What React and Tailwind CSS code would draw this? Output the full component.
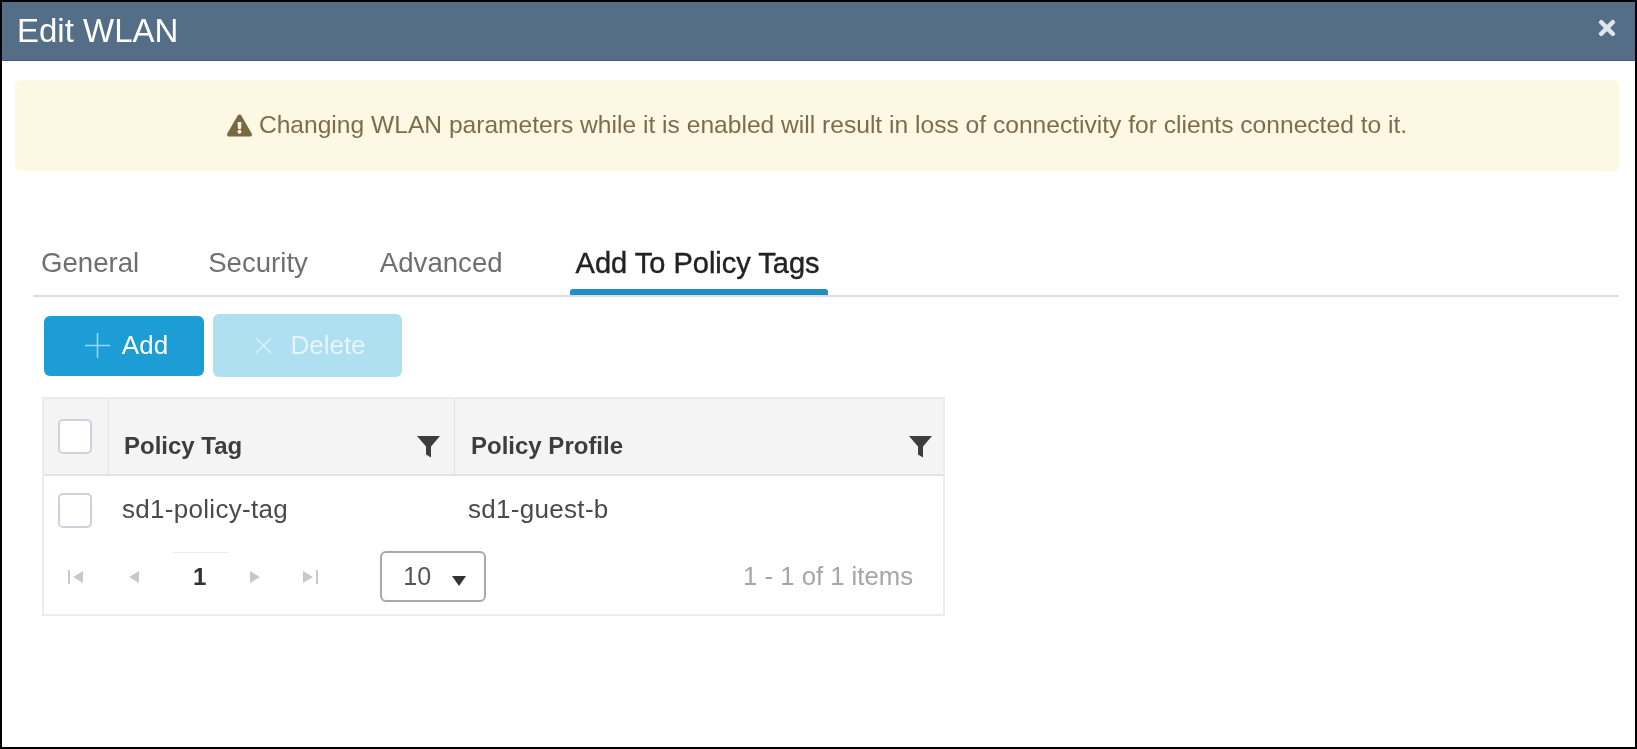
import React from "react";
import { FaTimes, FaExclamationTriangle } from "react-icons/fa";

const Filter = ({ className }) => (
  <svg viewBox="0 0 23 23" className={className} fill="#3d3d3d">
    <path d="M0 1h23L14 11.5V22.500l-5-3V11.500z" />
  </svg>
);

const Pg = ({ dir, bar, className }) => (
  <svg viewBox="0 0 16 14" className={className} fill="#c9c9c9">
    {dir === "l" ? (
      <>
        {bar && <rect x="0" y="0" width="2" height="14" />}
        <path d="M15 1v12L5 7z" />
      </>
    ) : (
      <>
        {bar && <rect x="14" y="0" width="2" height="14" />}
        <path d="M1 1v12l10-6z" />
      </>
    )}
  </svg>
);

const Check = ({ className = "" }) => (
  <div className={`h-[35px] w-[34px] rounded-[5px] border-2 border-[#ccd3dc] bg-white ${className}`} />
);

export default function App() {
  return (
    <div
      className="flex h-[749px] w-[1637px] flex-col overflow-hidden border-2 border-black bg-white blur-[0.6px]"
      style={{ fontFamily: '"Liberation Sans", Arial, sans-serif' }}
    >
      <header className="flex h-[59px] shrink-0 items-center justify-between border-b border-[#46596b] bg-[#536e86] pl-[15px] pr-[16px] text-white">
        <h1 className="mb-[2px] text-[33px] leading-none">Edit WLAN</h1>
        <FaTimes className="mb-[6px] text-[24px] text-[#dfe5ea]" />
      </header>

      <div className="ml-[13px] mr-[16px] mt-[19px] flex h-[91px] shrink-0 items-center justify-center rounded-[5px] bg-[#fcf8e4] text-[24.6px] text-[#7d6d4b]">
        <FaExclamationTriangle className="mr-[7px] text-[25px] text-[#7a6743]" />
        <span>Changing WLAN parameters while it is enabled will result in loss of connectivity for clients connected to it.</span>
      </div>

      <nav className="ml-[31px] mr-[16px] mt-[67px] flex h-[59px] shrink-0 items-start border-b-2 border-[#d9dde2] pl-[8px] pt-[3px] text-[27.6px] leading-[44px] text-[#6f6f6f]">
        <span className="mr-[69px]">General</span>
        <span className="mr-[72px]">Security</span>
        <span className="mr-[73px]">Advanced</span>
        <span className="relative text-[29px] text-[#222222] [-webkit-text-stroke:0.4px_#222222]">
          Add To Policy Tags
          <span className="absolute -left-[6px] -right-[8px] top-[48px] h-[6px] rounded-t-[3px] bg-[#1f8fc4]" />
        </span>
      </nav>

      <div className="ml-[42px] mt-[17px] flex items-center gap-[9px] text-[26px] text-white">
        <button className="flex h-[60px] w-[160px] items-center justify-center gap-[12px] rounded-[6px] bg-[#1c9dd6] pl-[5px]">
          <svg viewBox="0 0 24 24" className="h-[25px] w-[25px]" stroke="#9fd6ee" strokeWidth="1.500" fill="none">
            <path d="M12 0v24M0 12h24" />
          </svg>
          <span>Add</span>
        </button>
        <button className="flex h-[63px] w-[189px] items-center justify-center gap-[18px] rounded-[6px] bg-[#aee0f1] pl-[6px] text-[#e6f5fb]">
          <svg viewBox="0 0 18 18" className="h-[17px] w-[17px]" stroke="#dcf1f9" strokeWidth="1.500" fill="none">
            <path d="M1 1l16 16M17 1L1 17" />
          </svg>
          <span>Delete</span>
        </button>
      </div>

      <div className="ml-[40px] mt-[20px] w-[903px] border-2 border-[#ececec] text-[24px]">
        <div className="flex h-[77px] border-b-2 border-[#e3e3e3] bg-[#f4f4f4] font-bold text-[#3d3d3d]">
          <div className="w-[65px] border-r border-[#e3e3e3] pl-[14px] pt-[20px]">
            <Check className="bg-[#f7f8f9]" />
          </div>
          <div className="flex w-[346px] items-center justify-between border-r border-[#e3e3e3] pb-[1px] pl-[15px] pr-[14px] pt-[20px]">
            <span>Policy Tag</span>
            <Filter className="h-[23px] w-[23px]" />
          </div>
          <div className="flex flex-1 items-center justify-between pb-[1px] pl-[16px] pr-[11px] pt-[20px]">
            <span>Policy Profile</span>
            <Filter className="h-[23px] w-[23px]" />
          </div>
        </div>
        <div className="flex items-center pt-[14px] text-[26px] tracking-[0.3px] text-[#4a4a4a]">
          <Check className="ml-[14px]" />
          <span className="mb-[2px] ml-[30px] w-[345px]">sd1-policy-tag</span>
          <span className="mb-[2px] ml-px">sd1-guest-b</span>
        </div>
        <div className="flex h-[83px] items-center pb-[2px] pt-[10px]">
          <Pg dir="l" bar className="ml-[24px] h-[14px] w-[16px]" />
          <Pg dir="l" className="ml-[40px] h-[14px] w-[16px]" />
          <span className="relative ml-[53px] font-bold text-[#333333]">
            1
            <span className="absolute -left-[20px] -right-[23px] -top-[7px] h-px bg-[#ececec]" />
          </span>
          <Pg dir="r" className="ml-[43px] h-[14px] w-[16px]" />
          <Pg dir="r" bar className="ml-[37px] h-[14px] w-[16px]" />
          <div className="ml-[62px] flex h-[51px] w-[106px] items-center rounded-[6px] border-2 border-[#a9a9a9] pl-[21px] text-[25px] text-[#555555]">
            <span>10</span>
            <svg viewBox="0 0 14 10" className="ml-[21px] mt-[8px] h-[10px] w-[14px]" fill="#333333">
              <path d="M0 0h14L7 10z" />
            </svg>
          </div>
          <span className="ml-auto mr-[30px] text-[25.7px] text-[#a6a6a6]">1 - 1 of 1 items</span>
        </div>
      </div>
    </div>
  );
}
